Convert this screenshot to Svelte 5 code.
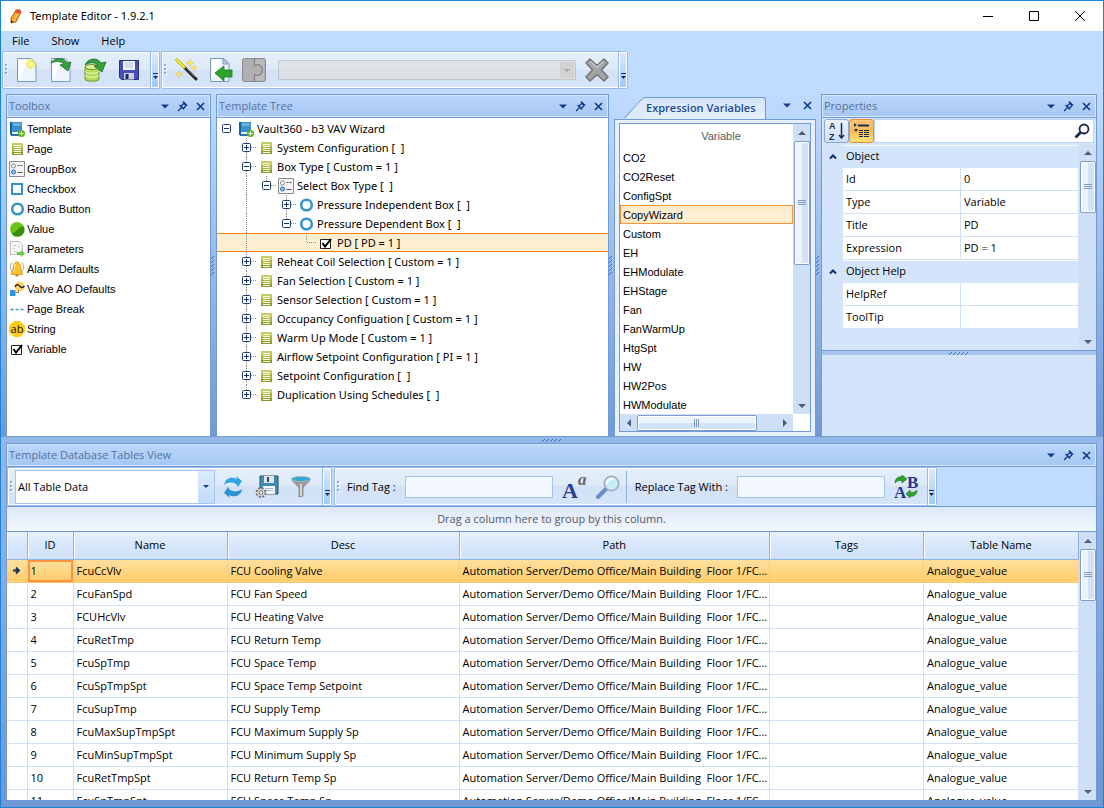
<script lang="ts">
  const menus = ['File', 'Show', 'Help'];

  const tools = [
    ['template', 'Template'],
    ['page', 'Page'],
    ['group', 'GroupBox'],
    ['check', 'Checkbox'],
    ['radio', 'Radio Button'],
    ['value', 'Value'],
    ['params', 'Parameters'],
    ['alarm', 'Alarm Defaults'],
    ['valve', 'Valve AO Defaults'],
    ['break', 'Page Break'],
    ['string', 'String'],
    ['variable', 'Variable']
  ];

  // guides: one letter per indent cell, "|" draws a line through it
  // joint: how the line runs through the node's own cell
  type Node = { guides: string; joint: string; box: string; icon: string; label: string };
  const tree: Node[] = [
    { guides: '', joint: 'none', box: '-', icon: 'template', label: 'Vault360 - b3 VAV Wizard' },
    { guides: ' ', joint: 'full', box: '+', icon: 'page', label: 'System Configuration [  ]' },
    { guides: ' ', joint: 'full', box: '-', icon: 'page', label: 'Box Type [ Custom = 1 ]' },
    { guides: ' |', joint: 'top', box: '-', icon: 'group', label: 'Select Box Type [  ]' },
    { guides: ' | ', joint: 'full', box: '+', icon: 'radio', label: 'Pressure Independent Box [  ]' },
    { guides: ' | ', joint: 'top', box: '-', icon: 'radio', label: 'Pressure Dependent Box [  ]' },
    { guides: ' |  ', joint: 'top', box: '', icon: 'variable', label: 'PD [ PD = 1 ]' },
    { guides: ' ', joint: 'full', box: '+', icon: 'page', label: 'Reheat Coil Selection [ Custom = 1 ]' },
    { guides: ' ', joint: 'full', box: '+', icon: 'page', label: 'Fan Selection [ Custom = 1 ]' },
    { guides: ' ', joint: 'full', box: '+', icon: 'page', label: 'Sensor Selection [ Custom = 1 ]' },
    { guides: ' ', joint: 'full', box: '+', icon: 'page', label: 'Occupancy Configuation [ Custom = 1 ]' },
    { guides: ' ', joint: 'full', box: '+', icon: 'page', label: 'Warm Up Mode [ Custom = 1 ]' },
    { guides: ' ', joint: 'full', box: '+', icon: 'page', label: 'Airflow Setpoint Configuration [ PI = 1 ]' },
    { guides: ' ', joint: 'full', box: '+', icon: 'page', label: 'Setpoint Configuration [  ]' },
    { guides: ' ', joint: 'top', box: '+', icon: 'page', label: 'Duplication Using Schedules [  ]' }
  ];
  let selectedNode = $state(6);

  const variables = [
    'CO2', 'CO2Reset', 'ConfigSpt', 'CopyWizard', 'Custom', 'EH', 'EHModulate',
    'EHStage', 'Fan', 'FanWarmUp', 'HtgSpt', 'HW', 'HW2Pos', 'HWModulate'
  ];
  let selectedVariable = $state('CopyWizard');

  const groups = [
    { title: 'Object', rows: [['Id', '0'], ['Type', 'Variable'], ['Title', 'PD'], ['Expression', 'PD = 1']] },
    { title: 'Object Help', rows: [['HelpRef', ''], ['ToolTip', '']] }
  ];

  const path = 'Automation Server/Demo Office/Main Building  Floor 1/FC...';
  const points = [
    ['FcuCcVlv', 'FCU Cooling Valve'],
    ['FcuFanSpd', 'FCU Fan Speed'],
    ['FCUHcVlv', 'FCU Heating Valve'],
    ['FcuRetTmp', 'FCU Return Temp'],
    ['FcuSpTmp', 'FCU Space Temp'],
    ['FcuSpTmpSpt', 'FCU Space Temp Setpoint'],
    ['FcuSupTmp', 'FCU Supply Temp'],
    ['FcuMaxSupTmpSpt', 'FCU Maximum Supply Sp'],
    ['FcuMinSupTmpSpt', 'FCU Minimum Supply Sp'],
    ['FcuRetTmpSpt', 'FCU Return Temp Sp'],
    ['FcuSpTmpSpt', 'FCU Space Temp Sp']
  ];
  let selectedPoint = $state(0);
</script>

{#snippet icon(name: string)}
  <svg class="ic" viewBox="0 0 16 16" width="16" height="16" aria-hidden="true">
    {#if name === 'template'}
      <path d="M1 1h12v10H1z" fill="#3b8fc9" /><path d="M1 1h2v13H1z" fill="#1f5f97" />
      <path d="M4 2h8v3H4z" fill="#68b2e2" /><path d="M3 11h10v2H3z" fill="#e8eef4" /><path d="M2 13h11v2H2z" fill="#2b70aa" />
      <circle cx="12.500" cy="12.500" r="3.500" fill="#5db31b" /><path d="M10.500 12.500h4M12.500 10.500v4" stroke="#fff" />
    {:else if name === 'page'}
      <path d="M3 2h11v12H3z" fill="#a9b442" /><path d="M3 2h11v4H3z" fill="#c6cb66" /><path d="M3 11h11v3H3z" fill="#8f9a2e" />
      <path d="M5 4.500h7M5 6.500h7M5 8.500h7M5 10.500h7M5 12.500h7" stroke="#fafbe6" />
    {:else if name === 'group'}
      <path d="M.5.5h15v15H.5z" fill="#f4f4f4" stroke="#8b8b8b" />
      <circle cx="4.500" cy="5" r="2" fill="#fff" stroke="#888" /><circle cx="4.500" cy="11" r="2" fill="#8cc3ec" stroke="#2b6cb0" />
      <path d="M8.500 4.500h2M11.500 4.500h2M8.500 11.500h5" stroke="#555" />
    {:else if name === 'check'}
      <path d="M3 3h10v10H3z" fill="#fff" stroke="#3490c8" stroke-width="2" />
    {:else if name === 'radio'}
      <circle cx="8.500" cy="8" r="5.300" fill="#fff" stroke="#3694cc" stroke-width="2.600" />
    {:else if name === 'value'}
      <circle cx="8" cy="8" r="7" fill="#6cc417" /><path d="M14.500 5A7 7 0 0 1 2.500 12.500C8 11 9 6 14.500 5z" fill="#379106" />
    {:else if name === 'params'}
      <path d="M1.500.5h9l3 3v10h-12z" fill="#f7f7f7" stroke="#bcbcbc" />
      <path d="M4 4.500h3M4 7.500h2M9 5.500h2M5 10.500h3" stroke="#c7c7c7" />
      <path d="M8 11h4V9l4 3.500-4 3.500v-2H8z" fill="#63ce48" />
    {:else if name === 'alarm'}
      <path d="M3 1.500Q-.5 6 3 10.500M13 1.500Q16.500 6 13 10.500" fill="none" stroke="#aaa" />
      <path d="M8 1c3 0 4 4 4 7l1.500 4v1.500h-11V12L4 8c0-3 1-7 4-7z" fill="#fbc02d" stroke="#c98a0c" stroke-width=".700" />
      <path d="M6.500 3c-1 2-1 5-1.500 8" stroke="#fff0a8" fill="none" /><path d="M6.500 13.500h3v2h-3z" fill="#c98a0c" />
    {:else if name === 'valve'}
      <circle cx="10.500" cy="5.500" r="5" fill="#fbd069" /><path d="M6 6q2-4 4.500-1t5 0" fill="none" stroke="#222" stroke-width="1.300" />
      <path d="M1 9h5.500v6H1z" fill="#2f93dc" /><path d="M6.500 11.500h3V9" fill="none" stroke="#b66a16" />
    {:else if name === 'break'}
      <path d="M1.500 8.500h3M6.500 8.500h3M11.500 8.500h3" stroke="#3694cc" stroke-width="1.500" />
    {:else if name === 'string'}
      <path d="M5 0h6l5 5v6l-5 5H5l-5-5V5z" fill="#ffc915" />
      <text x="8" y="12" text-anchor="middle" font-family="Open Sans, sans-serif" font-size="11" fill="#111">ab</text>
    {:else if name === 'variable'}
      <path d="M2.500 4.500h10v9h-10z" fill="#fff" stroke="#222" /><path d="M4.500 8l2.500 3.500L13 4" fill="none" stroke="#000" stroke-width="2" />
    {:else if name === 'pencil'}
      <path d="M8 2l5 2-5 10-5 1V10z" fill="#f6a623" stroke="#9a5413" stroke-width=".800" />
      <path d="M8 2q3-2.500 5.500 1.500L12.500 6 7 4.500z" fill="#e0543c" /><path d="M10 5.500L5.500 13" stroke="#ffd27a" /><path d="M3 15v-3l2.500 2z" fill="#3b2a1a" />
    {/if}
  </svg>
{/snippet}

{#snippet big(name: string)}
  <svg class="big" viewBox="0 0 24 24" width="24" height="24" aria-hidden="true">
    {#if name === 'new' || name === 'open' || name === 'import'}
      <path d="M2.500.5H16l5 5V23.500H2.500z" fill="#eef4fb" stroke="#7c9ab8" /><path d="M4 22V2h8C10 10 7 16 4 22z" fill="#fff" />
    {/if}
    {#if name === 'new'}
      <path d="M16 0l1.200 3L20 1.500 18.800 4.500 22 6l-3 1.200L20 10l-2.800-1.200L16 12l-1.200-3.200L12 10l1.200-2.800L10 6l3.200-1.500L12 1.500 14.800 3z" fill="#f5ec3b" />
      <circle cx="16" cy="6" r="2" fill="#fffbd0" />
    {:else if name === 'open'}
      <path d="M2 5C6-1 15-1 18 5l4-1-3 9-8-6 4-1C12 3 7 3 2 5z" fill="#37a23c" stroke="#176c28" stroke-width=".800" />
    {:else if name === 'db'}
      <path d="M2 9v12c0 3 14 3 14 0V9z" fill="#b4d95b" stroke="#6d9a2b" /><ellipse cx="9" cy="9" rx="7" ry="2.500" fill="#dcf09a" stroke="#6d9a2b" />
      <path d="M2 13c0 3 14 3 14 0M2 17c0 3 14 3 14 0" fill="none" stroke="#edf8c4" />
      <path d="M2 7C5 0 14-1 18 5l5-1-4 10-8-6 4-1C12 4 7 4 2 7z" fill="#37a23c" stroke="#176c28" stroke-width=".800" />
    {:else if name === 'save'}
      <path d="M2.500 2.500h19v19h-17l-2-2z" fill="#4650b8" stroke="#2a2f7c" /><path d="M6 3h12v9H6z" fill="#f2f4fc" /><path d="M8 5h8M8 7h8M8 9h8" stroke="#b8c0e0" />
      <path d="M7 15h10v6.500H7z" fill="#c9cdde" /><path d="M8.500 16h3v5h-3z" fill="#222766" />
    {:else if name === 'wand'}
      <path d="M3 2l19 19" stroke="#23242a" stroke-width="3" stroke-linecap="round" /><path d="M3 2l7 7" stroke="#efe41d" stroke-width="3" stroke-linecap="round" /><path d="M11 9l10 10" stroke="#6b6d78" />
      <path d="M16 1l1 3 3 1-3 1-1 3-1-3-3-1 3-1zM5 13l1 2 3 1-3 1-1 3-1-3-3-1 3-1zM20 7l1 2 2 1-2 1-1 2-1-2-2-1 2-1z" fill="#ffe45c" stroke="#e0b93a" stroke-width=".400" />
    {:else if name === 'import'}
      <path d="M15 1v5h5z" fill="#c9d9ea" stroke="#7c9ab8" />
      <path d="M7 15l9-7v4h8v7h-8v4z" fill="#2da52c" stroke="#14781c" stroke-width=".800" />
    {:else if name === 'puzzle'}
      <path d="M.5 2.500q0-2 2-2h19q2 0 2 2v19q0 2-2 2h-19q-2 0-2-2z" fill="#b0b0b0" stroke="#8b8b8b" />
      <path d="M12.500 2v5.500c4-2 8 0 8 4.500s-4 6.500-8 4.500V22H22V2z" fill="#bdbdbd" />
      <path d="M12.500 1v6.500c4-2 8 0 8 4.500s-4 6.500-8 4.500V23" fill="none" stroke="#858585" stroke-width="1.300" />
    {:else if name === 'delete'}
      <path d="M5 1l7 6.500L19 1l4 4-6.500 7L23 19l-4 4-7-6.500L5 23l-4-4 6.500-7L1 5z" fill="#a4a4a4" stroke="#747474" stroke-width="1.500" stroke-linejoin="round" /><path d="M5 3l7 6.500L19 3" stroke="#c6c6c6" fill="none" stroke-width="1.500" />
    {:else if name === 'refresh'}
      <path d="M3 10C4 3 11 1 16 4l-1-3 6 5-4 6-2-3C11 7 7 7 3 10z" fill="#31a5e0" /><path d="M21 14c-1 7-8 9-13 6l1 3-6-5 4-6 2 3c4 2 8 2 12-1z" fill="#2b93d2" />
    {:else if name === 'savegear'}
      <path d="M5 1h18v18H5z" fill="#3d8cb8" stroke="#37505f" /><path d="M9 1h10v7H9z" fill="#dfe7ec" /><path d="M12 2h2v5h-2z" fill="#34495a" /><path d="M8 11h12v8H8z" fill="#f5f8fa" /><path d="M10 13.500h8M10 15.500h8" stroke="#a6b8c3" />
      <circle cx="6" cy="17.500" r="4.200" fill="#d7d7d7" stroke="#747474" stroke-width="2.500" stroke-dasharray="2 1.300" /><circle cx="6" cy="17.500" r="3.500" fill="#d7d7d7" /><circle cx="6" cy="17.500" r="1.800" fill="#fff" stroke="#666" />
    {:else if name === 'funnel'}
      <path d="M3 4c0 4 7 6 7 10v8l4-1v-7c0-4 7-6 7-10z" fill="#9b9b9b" stroke="#787878" stroke-width=".700" /><path d="M12 9v12" stroke="#e8e8e8" stroke-width="1.500" /><ellipse cx="12" cy="4" rx="9.500" ry="2.500" fill="#35a9cf" stroke="#a9b5ba" />
    {:else if name === 'case'}
      <text x="0" y="23" font-family="Liberation Serif, serif" font-weight="bold" font-size="22" fill="#2c3b92">A</text>
      <text x="16" y="10" font-family="Liberation Serif, serif" font-weight="bold" font-style="italic" font-size="17" fill="#666">a</text>
    {:else if name === 'find'}
      <path d="M10 14l-8 8" stroke="#688fca" stroke-width="4" stroke-linecap="round" /><circle cx="15.500" cy="8.500" r="7.200" fill="#c6ecfa" stroke="#a1aab0" stroke-width="1.500" /><path d="M11 9q0-5 6-5" stroke="#fff" stroke-width="2" fill="none" />
    {:else if name === 'replace'}
      <text x="0" y="23" font-family="Liberation Serif, serif" font-weight="bold" font-size="17" fill="#26358e">A</text>
      <text x="13" y="13" font-family="Liberation Serif, serif" font-weight="bold" font-size="17" fill="#26358e">B</text>
      <path d="M1 8C1 3 5 1 8 2V0l5 4-5 4V6C5 5 3 6 1 8z" fill="#2ca52f" stroke="#15701f" stroke-width=".600" /><path d="M23 15c0 5-4 7-7 6v2l-4-4 4-4v2c3 1 5 0 7-2z" fill="#2ca52f" stroke="#15701f" stroke-width=".600" />
    {/if}
  </svg>
{/snippet}

{#snippet down()}
  <svg width="8" height="5" viewBox="0 0 8 5" aria-hidden="true"><path d="M0 .5h8L4 4.500z" fill="#0f3c8c" /></svg>
{/snippet}

{#snippet caption(title: string)}
  <header class="caption">
    <h2>{title}</h2>
    {@render captionButtons(true)}
  </header>
{/snippet}

{#snippet captionButtons(pin: boolean)}
  <div class="caption-buttons">
    <button aria-label="Window position">{@render down()}</button>
    {#if pin}
      <button aria-label="Auto hide">
        <svg width="11" height="11" viewBox="0 0 11 11" aria-hidden="true">
          <path d="M6 1.500l3.500 3.500M7 2.500L4 5l2.500 2.500L9 4.500M2.500 4l4.500 4.500M4.500 6.500L1 10" fill="none" stroke="#0f3c8c" stroke-width="1.300" />
          <path d="M6.500 0L10.500 4 9.500 5 5.500 1z" fill="#0f3c8c" />
        </svg>
      </button>
    {/if}
    <button aria-label="Close">
      <svg width="9" height="9" viewBox="0 0 9 9" aria-hidden="true"><path d="M1 1l7 7M8 1L1 8" stroke="#0f3c8c" stroke-width="1.700" /></svg>
    </button>
  </div>
{/snippet}

{#snippet overflow()}
  <button class="overflow" aria-label="Toolbar options">
    <svg width="5" height="6" viewBox="0 0 5 6" aria-hidden="true"><path d="M0 .5h5" stroke="#0f2c66" /><path d="M0 3h5L2.500 6z" fill="#0f2c66" /></svg>
  </button>
{/snippet}

{#snippet grip()}
  <svg class="grip" width="3" height="12" viewBox="0 0 3 12" aria-hidden="true">
    {#each [0, 4, 8] as y}
      <path d="M1 {y + 1}h2v2H1z" fill="#fff" /><path d="M0 {y}h2v2H0z" fill="#86abdc" />
    {/each}
  </svg>
{/snippet}

{#snippet splitDots(vertical: boolean)}
  <svg width={vertical ? 4 : 20} height={vertical ? 20 : 4} aria-hidden="true">
    {#each [0, 4, 8, 12, 16] as p}
      <path
        d={vertical ? `M0 ${p + 2}h1v1H0zM1 ${p + 1}h1v1H1zM2 ${p}h1v1H2z` : `M${p} 3h1v1h-1zM${p + 1} 2h1v1h-1zM${p + 2} 1h1v1h-1z`}
        fill="#2f6fc8"
      />
    {/each}
  </svg>
{/snippet}

{#snippet scrollbar(kind: string, size: string)}
  <div class="scroll {kind}">
    <button class="arrow" aria-label="Scroll back">
      <svg width="8" height="8" viewBox="0 0 8 8" aria-hidden="true"><path d={kind === 'vert' ? 'M0 6h8L4 2z' : 'M6 0v8L2 4z'} fill="#4c5e7c" /></svg>
    </button>
    <div class="thumb {size}">
      <svg width="8" height="8" viewBox="0 0 8 8" aria-hidden="true">
        <path d={kind === 'vert' ? 'M0 1.500h8M0 3.500h8M0 5.500h8' : 'M1.500 0v8M3.500 0v8M5.500 0v8'} stroke="#7b9cc9" />
      </svg>
    </div>
    <button class="arrow last" aria-label="Scroll forward">
      <svg width="8" height="8" viewBox="0 0 8 8" aria-hidden="true"><path d={kind === 'vert' ? 'M0 2h8L4 6z' : 'M2 0v8l4-4z'} fill="#4c5e7c" /></svg>
    </button>
  </div>
{/snippet}

<div class="window">
  <header class="titlebar">
    {@render icon('pencil')}
    <h1>Template Editor - 1.9.2.1</h1>
    <div class="window-buttons">
      <button aria-label="Minimize"><svg width="10" height="10"><path d="M0 5.500h10" stroke="#000" /></svg></button>
      <button aria-label="Maximize"><svg width="10" height="10"><path d="M.5.5h9v9h-9z" fill="none" stroke="#000" /></svg></button>
      <button aria-label="Close window"><svg width="10" height="10"><path d="M0 0l10 10M10 0L0 10" stroke="#000" /></svg></button>
    </div>
  </header>

  <nav class="menu">
    {#each menus as m}<button>{m}</button>{/each}
  </nav>

  <div class="toolbars">
    <div class="strip">
      {@render grip()}
      <button class="tool" aria-label="New">{@render big('new')}</button>
      <button class="tool" aria-label="Open">{@render big('open')}</button>
      <button class="tool" aria-label="Open database">{@render big('db')}</button>
      <button class="tool" aria-label="Save">{@render big('save')}</button>
      {@render overflow()}
    </div>
    <div class="strip">
      {@render grip()}
      <button class="tool" aria-label="Wizard">{@render big('wand')}</button>
      <button class="tool" aria-label="Import">{@render big('import')}</button>
      <button class="tool" aria-label="Plugin" disabled>{@render big('puzzle')}</button>
      <div class="combo plugin-combo">
        <select aria-label="Plugin" disabled></select>
        <span class="drop"><svg width="6" height="3" viewBox="0 0 6 3"><path d="M0 0h6L3 3z" fill="#a3a3a3" /></svg></span>
      </div>
      <button class="tool" aria-label="Delete" disabled>{@render big('delete')}</button>
      {@render overflow()}
    </div>
  </div>

  <main class="dock">
    <section class="panel">
      {@render caption('Toolbox')}
      <ul class="toolbox">
        {#each tools as [ic, label]}
          <li>{@render icon(ic)}<span>{label}</span></li>
        {/each}
      </ul>
    </section>

    <div class="split">{@render splitDots(true)}</div>

    <section class="panel">
      {@render caption('Template Tree')}
      <ul class="tree" role="tree">
        {#each tree as node, i}
          <li role="treeitem" aria-selected={i === selectedNode} class:selected={i === selectedNode}>
            {#each node.guides.split('') as g}
              <svg class="guide" width="20" height="19" aria-hidden="true">
                {#if g === '|'}<path d="M9.500 0v19" />{/if}
              </svg>
            {/each}
            <span class="joint">
              <svg class="guide" width="20" height="19" aria-hidden="true">
                {#if node.joint !== 'none'}
                  <path d={node.joint === 'full' ? 'M9.500 0v19' : 'M9.500 0v9'} /><path d="M10 9.500h9" />
                {/if}
              </svg>
              {#if node.box}
                <button class="expander" aria-label={node.box === '+' ? 'Expand' : 'Collapse'}>
                  <svg width="9" height="9" viewBox="0 0 9 9" aria-hidden="true">
                    <rect x=".5" y=".5" width="8" height="8" rx="1" fill="#fff" stroke="#20396e" />
                    <path d={node.box === '+' ? 'M2 4.500h5M4.500 2v5' : 'M2 4.500h5'} stroke="#14306a" />
                  </svg>
                </button>
              {/if}
            </span>
            <span class="slot">{@render icon(node.icon)}</span>
            <button class="label" onclick={() => (selectedNode = i)}>{node.label}</button>
          </li>
        {/each}
      </ul>
    </section>

    <div class="split">{@render splitDots(true)}</div>

    <section class="tabbed">
      <div class="tab-row">
        <svg class="slope" width="22" height="22" viewBox="0 0 22 22" aria-hidden="true">
          <path d="M0 22C6 20 14 1 22 .5V22z" fill="#deeafa" /><path d="M0 21.500L17 3Q19 .5 22 .5" fill="none" stroke="#6f9bd8" />
        </svg>
        <h2 class="tab">Expression Variables</h2>
        {@render captionButtons(false)}
      </div>
      <div class="tab-body">
        <div class="varbox">
          <table class="vars">
            <thead><tr><th>Variable</th></tr></thead>
            <tbody>
              {#each variables as v}
                <tr class:selected={v === selectedVariable} onclick={() => (selectedVariable = v)}><td>{v}</td></tr>
              {/each}
            </tbody>
          </table>
          {@render scrollbar('vert', 'tall')}
          {@render scrollbar('horiz', 'wide')}
          <div class="corner"></div>
        </div>
      </div>
    </section>

    <div class="split">{@render splitDots(true)}</div>

    <section class="panel">
      {@render caption('Properties')}
      <div class="props">
        <div class="prop-bar">
          <button class="sort" aria-label="Sort alphabetically">
            <svg width="16" height="20" viewBox="0 0 16 20" aria-hidden="true">
              <text x="0" y="8" font-family="Liberation Sans, sans-serif" font-weight="bold" font-size="9" fill="#1d2d50">A</text>
              <text x="0" y="19" font-family="Liberation Sans, sans-serif" font-weight="bold" font-size="9" fill="#1d2d50">Z</text>
              <path d="M12.500 2v14M10 14l2.500 3 2.500-3" stroke="#1d2d50" fill="none" stroke-width="1.500" />
            </svg>
          </button>
          <button class="sort on" aria-label="Group by category">
            <svg width="16" height="16" viewBox="0 0 16 16" aria-hidden="true">
              <path d="M0 0l3 2-3 2zM0 6h4L2 9z" fill="#1d2d50" /><path d="M4 2.500h11" stroke="#1d2d50" stroke-width="2" />
              <path d="M5 7.500h4M10 7.500h5M5 9.500h4M10 9.500h5M5 11.500h4M10 11.500h5M5 13.500h4M10 13.500h5" stroke="#1d2d50" />
            </svg>
          </button>
          <label class="search">
            <input type="text" aria-label="Search properties" />
            <svg width="16" height="16" viewBox="0 0 16 16" aria-hidden="true"><circle cx="10" cy="6" r="4.500" fill="none" stroke="#14284e" stroke-width="1.800" /><path d="M6.500 9.500L1.500 14.500" stroke="#14284e" stroke-width="2.800" /></svg>
          </label>
        </div>
        <div class="prop-grid">
          <table>
            <colgroup><col class="c-pad" /><col /><col /></colgroup>
            {#each groups as g}
              <tbody>
                <tr class="cat">
                  <td class="pad"><svg width="8" height="5" viewBox="0 0 8 5" aria-hidden="true"><path d="M1 4.500l3-3 3 3" fill="none" stroke="#122e66" stroke-width="2" /></svg></td>
                  <th colspan="2">{g.title}</th>
                </tr>
                {#each g.rows as [k, v]}
                  <tr><td class="pad"></td><td>{k}</td><td>{v}</td></tr>
                {/each}
              </tbody>
            {/each}
          </table>
          {@render scrollbar('vert', 'short')}
        </div>
        <div class="prop-split">{@render splitDots(false)}</div>
        <div class="prop-help"></div>
      </div>
    </section>
  </main>

  <div class="hsplit">{@render splitDots(false)}</div>

  <section class="panel database">
    {@render caption('Template Database Tables View')}
    <div class="db-bars">
      <div class="strip">
        {@render grip()}
        <div class="combo table-combo">
          <select aria-label="Table"><option>All Table Data</option></select>
          <span class="drop"><svg width="6" height="3" viewBox="0 0 6 3"><path d="M0 0h6L3 3z" fill="#0f3c8c" /></svg></span>
        </div>
        <button class="tool" aria-label="Refresh">{@render big('refresh')}</button>
        <button class="tool" aria-label="Save settings">{@render big('savegear')}</button>
        <button class="tool" aria-label="Filter">{@render big('funnel')}</button>
        {@render overflow()}
      </div>
      <div class="strip">
        {@render grip()}
        <label for="find">Find Tag :</label>
        <input id="find" type="text" />
        <button class="tool" aria-label="Match case">{@render big('case')}</button>
        <button class="tool" aria-label="Find">{@render big('find')}</button>
        <span class="sep"></span>
        <label for="replace">Replace Tag With :</label>
        <input id="replace" type="text" />
        <button class="tool" aria-label="Replace">{@render big('replace')}</button>
        {@render overflow()}
      </div>
    </div>
    <p class="group-hint">Drag a column here to group by this column.</p>
    <div class="grid-area">
      <div class="grid-clip">
        <table class="grid">
          <colgroup>
            <col class="w-mark" /><col class="w-id" /><col class="w-name" /><col class="w-desc" /><col /><col class="w-name" /><col class="w-table" />
          </colgroup>
          <thead>
            <tr><th></th><th>ID</th><th>Name</th><th>Desc</th><th>Path</th><th>Tags</th><th>Table Name</th></tr>
          </thead>
          <tbody>
            {#each points as [name, desc], i}
              <tr class:selected={i === selectedPoint} onclick={() => (selectedPoint = i)}>
                <td class="mark">
                  {#if i === selectedPoint}
                    <svg width="7" height="7" viewBox="0 0 7 7" aria-hidden="true"><path d="M0 3.500h5M3 .5l3 3-3 3" fill="none" stroke="#122e66" stroke-width="1.800" /></svg>
                  {/if}
                </td>
                <td>{i + 1}</td>
                <td>{name}</td>
                <td>{desc}</td>
                <td>{path}</td>
                <td></td>
                <td>Analogue_value</td>
              </tr>
            {/each}
          </tbody>
        </table>
      </div>
      {@render scrollbar('vert', 'short')}
    </div>
  </section>
</div>

<style>
  :global(body) { margin: 0; }
  .window {
    --line: #6f9bd8;
    display: flex; flex-direction: column; height: 100vh; box-sizing: border-box;
    border: 1px solid #1883d7;
    background: linear-gradient(#bfdbff 40px, #7099d4 780px);
    font-family: 'Open Sans', 'Noto Sans', sans-serif; font-size: 11px; line-height: 16px; color: #000;
  }
  .window :global(*) { box-sizing: border-box; }
  button {
    display: flex; align-items: center; justify-content: center; padding: 0; border: 0;
    background: none; font: inherit; color: inherit;
  }
  svg { display: block; flex: none; overflow: visible; }
  h1, h2, p, ul { margin: 0; padding: 0; font-size: inherit; font-weight: normal; list-style: none; }
  table { border-collapse: collapse; table-layout: fixed; width: 100%; }
  th, td { padding: 0 3px; font-weight: normal; text-align: left; white-space: pre; overflow: hidden; }
  input, select { font: inherit; border-radius: 0; outline: none; }

  .titlebar { display: flex; align-items: center; gap: 6px; height: 30px; padding-left: 7px; background: #fff; flex: none; }
  h1 { flex: 1; font-family: 'Noto Sans', sans-serif; }
  .window-buttons { display: flex; }
  .window-buttons button { width: 46px; height: 30px; }

  .menu { display: flex; height: 20px; padding-left: 3px; background: #bfdbff; flex: none; }
  .menu button { padding: 0 8px; margin-right: 6px; }

  .toolbars { display: flex; gap: 1px; height: 43px; padding: 0 1px 5px; background: #bfdbff; flex: none; }
  .strip {
    display: flex; align-items: center; border: 1px solid #98bbec; border-radius: 2px;
    box-shadow: inset 0 0 0 1px #fff; background: linear-gradient(#e6effa, #dde9f8 50%, #d2e1f5 50%, #d6e4f7);
  }
  .grip { margin: 0 2px; }
  .tool { width: 34px; height: 30px; }
  .overflow {
    width: 9px; height: 100%; margin-left: 4px; padding-top: 12px; border-left: 1px solid #98bbec;
    box-shadow: inset 0 0 0 1px #fff; background: linear-gradient(#dceafc, #bdd9fd 50%, #9ecbff);
  }
  .combo { position: relative; display: flex; }
  .combo select { appearance: none; width: 100%; height: 100%; padding: 0 2px; color: #000; border: 1px solid #a5c5ef; background: #fff; }
  .drop {
    position: absolute; inset: 1px 1px 1px auto; width: 16px; display: flex; align-items: center; justify-content: center;
    pointer-events: none; background: linear-gradient(#dcebfd, #c2dbfb);
  }
  .plugin-combo { width: 298px; height: 20px; margin: 0 4px 0 7px; }
  .plugin-combo select { border-color: #b5bab9; background: #e1e1e1; }
  .plugin-combo .drop { background: #d2d2d2; border: 1px solid #e1e1e1; }

  .dock {
    display: grid; grid-template: minmax(0, 1fr) / 205px 5px minmax(0, 1fr) 5px 202px 5px 276px;
    flex: 344 1 0; min-height: 0; padding: 0 6px 0 5px; background: linear-gradient(#bfdbff, #7099d4);
  }
  .split { display: flex; align-items: center; }
  .hsplit { display: flex; align-items: center; justify-content: center; height: 6px; flex: none; }
  .panel { display: flex; flex-direction: column; min-width: 0; min-height: 0; border: 1px solid var(--line); background: #fff; }
  .caption {
    display: flex; align-items: center; justify-content: space-between; height: 23px; padding: 0 5px 0 2px; flex: none;
    color: #55739f; border-bottom: 1px solid var(--line); box-shadow: inset 0 0 0 1px #d6e6fd;
    background: linear-gradient(#bbd6fb, #a6c7f1);
  }
  .caption-buttons { display: flex; align-items: center; gap: 8px; }

  .toolbox { flex: 1; padding-top: 1px; overflow: hidden; }
  .toolbox li { display: flex; align-items: center; gap: 2px; height: 20px; padding-left: 2px; font-family: 'Liberation Sans', Arial, sans-serif; }

  .tree { flex: 1; overflow: hidden; padding-top: 1px; font-family: 'Noto Sans', sans-serif; }
  .tree li { display: flex; align-items: center; height: 19px; }
  .tree li.selected { background: #ffefd2; box-shadow: inset 0 1px #ff8000, inset 0 -1px #ff8000; }
  .guide path { stroke: #8a8a8a; stroke-dasharray: 1 1; }
  .joint { position: relative; }
  .expander { position: absolute; left: 5px; top: 5px; }
  .slot { display: flex; width: 20px; padding-left: 1px; }
  .label { white-space: pre; }

  .tabbed { display: flex; flex-direction: column; min-width: 0; min-height: 0; }
  .tab-row { display: flex; align-items: flex-end; height: 25px; padding: 0 4px 0 10px; flex: none; }
  .tab {
    flex: none; height: 22px; padding: 0 9px 0 0; line-height: 20px; font-weight: 600; color: #1f4b93;
    border: 1px solid var(--line); border-width: 1px 1px 0 0; border-radius: 0 3px 0 0;
    background: linear-gradient(#d3e4fa, #e6effb);
  }
  .tab-row .caption-buttons { flex: 1; justify-content: flex-end; height: 23px; align-self: flex-start; gap: 12px; }
  .tab-body { display: flex; flex: 1; min-height: 0; padding: 3px 4px 4px; border: 1px solid var(--line); background: #e8f0fb; }
  .varbox {
    display: grid; grid-template: minmax(0, 1fr) 17px / minmax(0, 1fr) 17px; flex: 1; min-width: 0;
    border: 1px solid var(--line); background: #fff; overflow: hidden;
  }
  .vars { font-family: 'Liberation Sans', Arial, sans-serif; }
  .vars th { height: 24px; padding-left: 32px; text-align: center; color: #55595f; }
  .vars td { height: 19px; }
  .vars .selected td { background: linear-gradient(#ffe8c4, #fff1d9 50%, #ffe9c2); box-shadow: inset 0 0 0 1px #f59540; }

  .scroll { display: flex; align-items: center; background: #cfdff5; }
  .vert { flex-direction: column; width: 17px; }
  .arrow { width: 17px; height: 17px; flex: none; }
  .arrow.last { margin-top: auto; }
  .horiz .arrow.last { margin: 0 0 0 auto; }
  .thumb { display: flex; align-items: center; justify-content: center; border: 1px solid #7f9dcb; border-radius: 2px; box-shadow: inset 0 0 0 1px #fff; }
  .vert .thumb { width: 16px; background: linear-gradient(90deg, #edf3fc 50%, #d3e2f6 50%); }
  .horiz .thumb { height: 16px; background: linear-gradient(#edf3fc 50%, #d3e2f6 50%); }
  .tall { height: 124px; }
  .wide { width: 120px; }
  .short { height: 52px; }

  .props { display: flex; flex-direction: column; flex: 1; min-height: 0; background: #d4e5fb; }
  .prop-bar { display: flex; height: 26px; padding: 1px 2px; flex: none; }
  .sort { width: 25px; border: 1px solid #8ba9d6; border-radius: 3px; background: linear-gradient(#eaf2fc, #cfe0f6); }
  .sort.on { border-color: #f18a32; background: linear-gradient(#ffc57a, #ffbb55 50%, #ffe27a); }
  .search { position: relative; flex: 1; display: flex; border: 1px solid #bcd4f6; background: #fff; align-items: center; padding-right: 3px; }
  .search input { flex: 1; min-width: 0; border: 0; }
  .prop-grid { display: flex; flex: 1; align-items: stretch; justify-content: space-between; min-height: 0; }
  .prop-grid table { align-self: flex-start; flex: 1; width: 0; }
  .c-pad { width: 20px; }
  .prop-grid td, .prop-grid th { height: 23px; border: 1px solid #cfe0f7; background: #fff; }
  .prop-grid .pad, .prop-grid .cat th { background: #d4e5fb; border-color: #d4e5fb; }
  .prop-grid .pad svg { margin: 0 auto; }
  .prop-grid .cat th { box-shadow: inset 0 1px #fff; }
  .prop-split { display: flex; align-items: center; justify-content: center; height: 5px; border-top: 1px solid var(--line); background: #a9c6ef; flex: none; }
  .prop-help { flex: none; height: 81px; }

  .database { flex: 357 1 0; margin: 0 6px 6px 5px; }
  .db-bars { display: flex; gap: 2px; height: 40px; border-bottom: 1px solid var(--line); background: #bfdbff; flex: none; }
  .table-combo { width: 200px; height: 34px; }
  .table-combo + .tool { margin-left: 1px; }
  .db-bars input { width: 148px; height: 22px; padding: 0 3px; margin: 0 4px 0 9px; border: 1px solid #a3c2ec; background: #f2f8fe; }
  .db-bars label { padding-left: 5px; }
  .sep { width: 1px; height: 32px; margin: 0 3px 0 1px; background: #8eb0dd; }
  .group-hint { height: 24px; line-height: 24px; text-align: center; color: #55595f; background: linear-gradient(#dce8f9, #f3f7fd); flex: none; }
  .grid-area { display: flex; flex: 1; min-height: 0; border-top: 1px solid var(--line); }
  .grid-clip { flex: 1; overflow: hidden; }
  .w-mark { width: 20px; }
  .w-id { width: 46px; }
  .w-name { width: 154px; }
  .w-desc { width: 232px; }
  .w-table { width: 155px; }
  .grid th {
    height: 27px; text-align: center; border: 1px solid #8fb2e0; border-width: 0 1px 1px 0;
    background: linear-gradient(#e6f0fc, #d6e6fb 50%, #cfe0f7); box-shadow: inset 1px 0 #fff;
  }
  .grid td { height: 23px; border: 1px solid #cfe0f7; border-width: 0 1px 1px 0; }
  .grid .selected td { background: linear-gradient(#ffe1a0, #ffcb69); border-color: #f7c667; border-right-color: #e8cf9b; }
  .grid .selected td:nth-child(2) { box-shadow: inset 0 0 0 2px #fd9340; }
  .mark svg { margin: 0 auto; }
</style>
